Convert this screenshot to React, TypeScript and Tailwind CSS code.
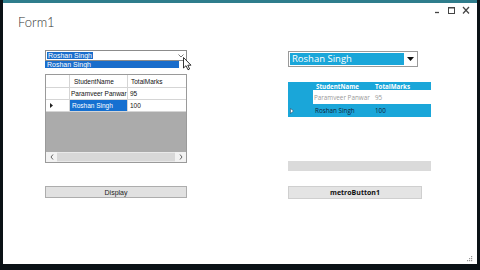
import React from "react";

const ws = { fontFamily: '"Liberation Sans", Arial, sans-serif' };
const ms = { fontFamily: '"Open Sans", "Noto Sans", sans-serif' };

export default function App() {
  return (
    <div className="w-[480px] h-[270px] bg-[#0b1116] flex">
      <div className="ml-[3px] w-[474px] h-[264px] bg-white border-t-[3px] border-[#2f7d8c] flex flex-col relative">
        {/* header */}
        <div className="flex h-[42px] items-start">
          <div
            className="pl-[15px] pt-[11px] text-[13px] leading-[16px] font-light text-[#333]"
            style={{ fontFamily: 'Lato, "Open Sans", sans-serif' }}
          >
            Form1
          </div>
          <svg className="ml-auto mr-[6px] mt-[3px]" width="38" height="9" viewBox="0 0 38 9">
            <line x1="2" y1="6.5" x2="6" y2="6.5" stroke="#444" strokeWidth="1.3" />
            <rect x="15.5" y="1.5" width="6" height="6" fill="none" stroke="#444" strokeWidth="1" />
            <line x1="15.5" y1="2" x2="21.5" y2="2" stroke="#444" strokeWidth="1" />
            <line x1="30" y1="1" x2="36" y2="7.5" stroke="#444" strokeWidth="1.2" />
            <line x1="36" y1="1" x2="30" y2="7.5" stroke="#444" strokeWidth="1.2" />
          </svg>
        </div>

        {/* content */}
        <div className="flex pl-[42px]">
          {/* left column: WinForms controls */}
          <div className="w-[142px] flex flex-col whitespace-nowrap" style={ws}>
            <div className="mt-[5px] h-[11px] border border-[#8c8c8c] flex items-center text-[7px] leading-[7px]">
              <span className="ml-px bg-[#1a6dcb] text-white px-px">Roshan Singh</span>
              <svg className="ml-auto mr-[2px]" width="6" height="4" viewBox="0 0 6 4">
                <polyline points="0.5,0.5 3,3 5.5,0.5" fill="none" stroke="#555" strokeWidth="0.8" />
              </svg>
            </div>
            <div className="h-[7px] w-[134px] bg-[#1a6dcb] text-white text-[7px] leading-[7px] pl-[2px]">
              Roshan Singh
            </div>
            <div className="mt-[6px] h-[89px] border border-[#9a9a9a] flex flex-col text-[6.5px] leading-[7px] text-[#111]">
              <div className="h-[13px] flex border-b border-[#d5d5d5]">
                <div className="w-[24px] border-r border-[#d5d5d5]" />
                <div className="w-[58px] border-r border-[#d5d5d5] flex items-center pl-[4px]">StudentName</div>
                <div className="flex-1 flex items-center pl-[3px]">TotalMarks</div>
              </div>
              <div className="h-[12px] flex border-b border-[#d5d5d5]">
                <div className="w-[24px] border-r border-[#d5d5d5]" />
                <div className="w-[58px] border-r border-[#d5d5d5] flex items-center pl-[1px]">Paramveer Panwar</div>
                <div className="flex-1 flex items-center pl-[2px]">95</div>
              </div>
              <div className="h-[12px] flex border-b border-[#d5d5d5]">
                <div className="w-[24px] border-r border-[#d5d5d5] flex items-center pl-[4px]">
                  <svg width="3" height="5" viewBox="0 0 3 5">
                    <polygon points="0,0 3,2.5 0,5" fill="#222" />
                  </svg>
                </div>
                <div className="w-[58px] border-r border-[#d5d5d5] bg-[#1570d1] text-white flex items-center pl-[2px]">Roshan Singh</div>
                <div className="flex-1 flex items-center pl-[2px]">100</div>
              </div>
              <div className="flex-1 bg-[#ababab]" />
              <div className="h-[10px] flex items-center bg-[#e9e9e9] text-[#555]">
                <div className="w-[11px] h-full flex items-center justify-center bg-[#f2f2f2]">
                  <svg width="4" height="6" viewBox="0 0 4 6">
                    <polyline points="3,0.5 1,3 3,5.5" fill="none" stroke="#555" strokeWidth="0.9" />
                  </svg>
                </div>
                <div className="flex-1 h-[8px] bg-[#d8d8d8]" />
                <div className="w-[11px] h-full flex items-center justify-center bg-[#f2f2f2]">
                  <svg width="4" height="6" viewBox="0 0 4 6">
                    <polyline points="1,0.5 3,3 1,5.5" fill="none" stroke="#555" strokeWidth="0.9" />
                  </svg>
                </div>
              </div>
            </div>
            <div className="mt-[23px] h-[12px] bg-[#e1e1e1] border border-[#adadad] flex items-center justify-center text-[7px] leading-[7px] text-[#222]">
              Display
            </div>
          </div>

          {/* right column: Metro controls */}
          <div className="ml-[101px] w-[143px] flex flex-col whitespace-nowrap" style={ms}>
            <div className="mt-[6px] w-[130px] h-[16px] border border-[#9a9a9a] bg-white flex p-px">
              <div className="flex-1 bg-[#1aa6d9] text-white text-[9.5px] leading-[12px] pl-[2px] flex items-center">
                Roshan Singh
              </div>
              <div className="w-[12px] flex items-center justify-center">
                <svg width="7" height="4" viewBox="0 0 7 4">
                  <polygon points="0,0 7,0 3.5,4" fill="#111" />
                </svg>
              </div>
            </div>
            <div className="mt-[15px] flex flex-col text-[6.3px] leading-[7px]">
              <div className="h-[8px] flex bg-[#1aa6d9] text-white font-bold text-[6.2px]">
                <div className="w-[25px]" />
                <div className="w-[62px] pl-[3px] flex items-center">StudentName</div>
                <div className="flex-1 flex items-center">TotalMarks</div>
              </div>
              <div className="h-[14px] flex text-[#9a9a9a]">
                <div className="w-[25px] bg-[#1aa6d9]" />
                <div className="w-[62px] pl-[1px] flex items-center">Paramveer Panwar</div>
                <div className="flex-1 flex items-center">95</div>
              </div>
              <div className="h-[13px] flex bg-[#1aa6d9] text-[#10243a]">
                <div className="w-[25px] flex items-center pl-[2px]">
                  <svg width="4" height="6" viewBox="0 0 4 6">
                    <polygon points="0.5,0.5 3.5,3 0.5,5.5" fill="#fff" stroke="#1c3550" strokeWidth="0.5" />
                  </svg>
                </div>
                <div className="w-[62px] pl-[2px] flex items-center">Roshan Singh</div>
                <div className="flex-1 flex items-center">100</div>
              </div>
            </div>
            <div className="mt-[44px] h-[10px] bg-[#dadada]" />
            <div
              className="mt-[15px] w-[134px] h-[13px] bg-[#e4e4e4] border border-[#cfcfcf] flex items-center justify-center text-[7px] leading-[7px] font-bold text-[#111]"
            >
              metroButton1
            </div>
          </div>
        </div>

        {/* mouse cursor */}
        <svg className="absolute left-[180px] top-[54px]" width="9" height="14" viewBox="0 0 9 14">
          <path d="M0.5,0.5 L0.5,11 L3,8.7 L5,12.8 L6.6,12 L4.8,8.2 L8,8.2 Z" fill="#fff" stroke="#000" strokeWidth="0.8" />
        </svg>

        {/* resize grip */}
        <svg className="absolute right-[4px] bottom-[2px]" width="6" height="6" viewBox="0 0 6 6">
          <rect x="4" y="0" width="1.2" height="1.2" fill="#999" />
          <rect x="2" y="2" width="1.2" height="1.2" fill="#999" />
          <rect x="4" y="2" width="1.2" height="1.2" fill="#999" />
          <rect x="0" y="4" width="1.2" height="1.2" fill="#999" />
          <rect x="2" y="4" width="1.2" height="1.2" fill="#999" />
          <rect x="4" y="4" width="1.2" height="1.2" fill="#999" />
        </svg>
      </div>
    </div>
  );
}
